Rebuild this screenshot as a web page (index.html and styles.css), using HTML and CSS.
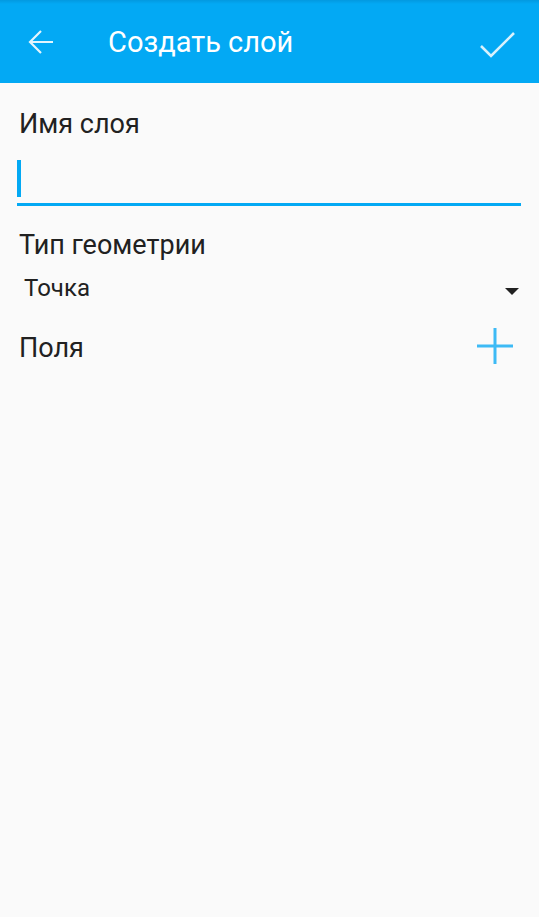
FILE: index.html
```html
<!DOCTYPE html>
<html lang="ru">
<head>
<meta charset="utf-8">
<link rel="stylesheet" href="styles.css">
</head>
<body>
<header class="toolbar">
  <button class="icon-btn back" aria-label="Назад">
    <svg width="36" height="36" viewBox="0 0 36 36"><path d="M30 18H8M18 7L7 18l11 11" fill="none" stroke="#e3f5fd" stroke-width="2.2"/></svg>
  </button>
  <h1 class="title">Создать слой</h1>
  <button class="icon-btn ok" aria-label="Готово">
    <svg width="40" height="36" viewBox="0 0 40 36"><path d="M4 22l10 10L37 9" fill="none" stroke="#d8f1fc" stroke-width="2.6"/></svg>
  </button>
</header>
<main class="content">
  <div class="label name">Имя слоя</div>
  <div class="input"><span class="cursor"></span></div>
  <div class="label geom">Тип геометрии</div>
  <div class="select">
    <span class="select-value">Точка</span>
    <span class="triangle"></span>
  </div>
  <div class="fields-row">
    <span class="label fields">Поля</span>
    <svg class="plus" width="36" height="36" viewBox="0 0 36 36"><path d="M18 0V36M0 18H36" stroke="#3dbaf5" stroke-width="3"/></svg>
  </div>
</main>
</body>
</html>
```

FILE: styles.css
```css
html, body {
  margin: 0;
  padding: 0;
  height: 100%;
}
body {
  background: #fafafa;
  font-family: Roboto, "Noto Sans", sans-serif;
  color: #212121;
}
.toolbar {
  height: 83px;
  background: linear-gradient(#0399e0 0, #03a9f4 4px, #03a9f4 100%);
  display: flex;
  align-items: center;
  padding: 0 22px 0 23px;
  box-sizing: border-box;
}
.icon-btn {
  background: none;
  border: 0;
  padding: 0;
  display: flex;
  align-items: center;
  justify-content: center;
}
.back { width: 36px; height: 36px; }
.ok { width: 40px; height: 36px; }
.title {
  flex: 1;
  margin: 0 0 0 49px;
  font-size: 29px;
  font-weight: 400;
  color: #fff;
}
.content {
  padding: 0 18px 0 17px;
}
.label {
  font-size: 27px;
  line-height: 32px;
  padding-left: 2px;
}
.name {
  padding-top: 25px;
}
.input {
  margin-top: 20px;
  height: 43px;
  border-bottom: 3px solid #03a9f4;
}
.cursor {
  display: block;
  width: 4px;
  height: 37px;
  background: #03a9f4;
  margin-top: 3px;
}
.geom {
  margin-top: 23px;
}
.select {
  display: flex;
  align-items: flex-start;
  justify-content: space-between;
  margin-top: 13px;
}
.select-value {
  font-size: 24px;
  line-height: 28px;
  padding-left: 7px;
}
.triangle {
  width: 0;
  height: 0;
  border-left: 7px solid transparent;
  border-right: 7px solid transparent;
  border-top: 7px solid #212121;
  margin-right: 2px;
  margin-top: 14px;
}
.fields-row {
  display: flex;
  align-items: flex-start;
  justify-content: space-between;
  margin-top: 26px;
}
.fields {
  margin-top: 4px;
}
.plus {
  margin-right: 8px;
}
```
